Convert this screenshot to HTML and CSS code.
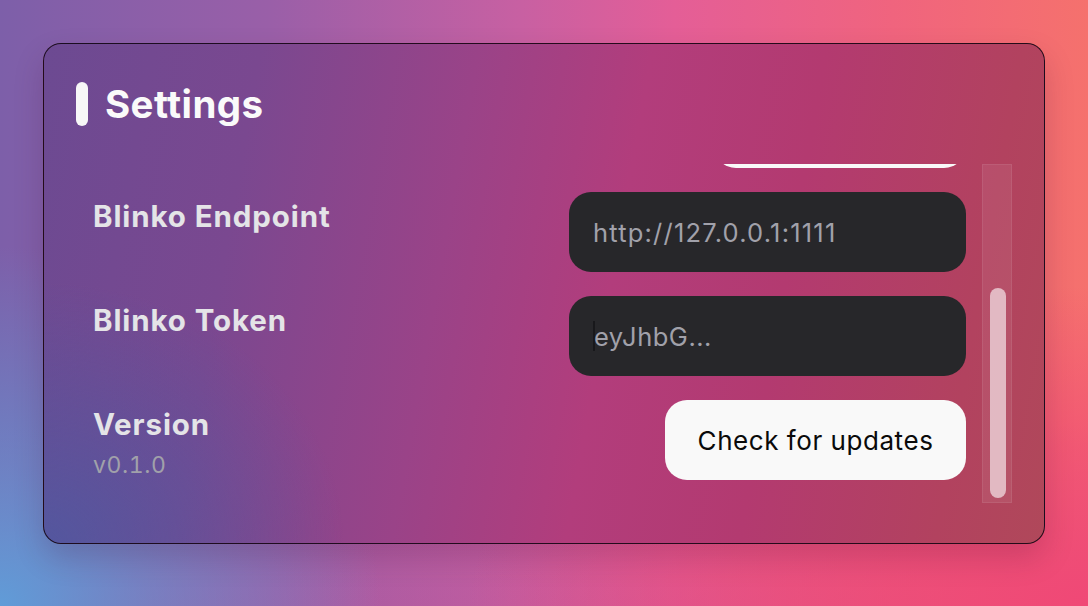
FILE: index.html
```html
<!DOCTYPE html>
<html lang="en">
<head>
<meta charset="utf-8">
<title>Settings</title>
<link rel="stylesheet" href="styles.css">
</head>
<body>
<div class="panel">
  <header class="head">
    <span class="bar"></span>
    <h1 class="title">Settings</h1>
  </header>
  <div class="scroll">
    <div class="content">
      <div class="list">
        <div class="row">
          <div class="label-col"></div>
          <div class="white-btn"></div>
        </div>
        <div class="row">
          <div class="label-col"><div class="label">Blinko Endpoint</div></div>
          <div class="field"><span class="value">http://127.0.0.1:1111</span></div>
        </div>
        <div class="row">
          <div class="label-col"><div class="label">Blinko Token</div></div>
          <div class="field"><span class="caret"></span><span class="placeholder">eyJhbG...</span></div>
        </div>
        <div class="row">
          <div class="label-col">
            <div class="label">Version</div>
            <div class="sub">v0.1.0</div>
          </div>
          <button class="btn">Check for updates</button>
        </div>
      </div>
    </div>
    <div class="track"><div class="thumb"></div></div>
  </div>
</div>
</body>
</html>
```

FILE: styles.css
```css
* { box-sizing: border-box; }
html, body { height: 100%; }
body {
  margin: 0;
  padding: 43px 43px 0 43px;
  font-family: Inter, "Noto Sans", sans-serif;
  background:
    radial-gradient(ellipse 380px 360px at 0% 100%, rgba(96,156,216,1) 0%, rgba(96,156,216,0.55) 40%, rgba(96,156,216,0) 100%),
    radial-gradient(ellipse 620px 320px at 100% 100%, rgba(240,72,118,1) 0%, rgba(240,72,118,0.6) 50%, rgba(240,72,118,0) 100%),
    linear-gradient(180deg, rgba(0,0,0,0) 70%, rgba(180,80,150,0.25) 100%),
    linear-gradient(90deg, #7d5fa9 0%, #9a5fa8 25%, #c860a2 48%, #e45e97 62%, #f0647e 82%, #f5716d 100%);
  overflow: hidden;
}
.panel {
  width: 1002px;
  height: 501px;
  border: 1px solid rgba(20, 6, 18, 0.9);
  border-radius: 18px;
  padding: 38px 32px 40px 32px;
  display: flex;
  flex-direction: column;
  background:
    radial-gradient(ellipse 300px 260px at 0% 100%, rgba(80,88,160,0.9) 0%, rgba(80,88,160,0) 100%),
    linear-gradient(100deg, #6c4a92 0%, #7a4890 20%, #9a4388 40%, #b23d7c 56%, #b33a70 72%, #b2425f 90%, #b0485a 100%);
  box-shadow: 0 14px 30px rgba(60, 0, 40, 0.18);
  overflow: hidden;
}
.head {
  display: flex;
  align-items: center;
  gap: 17px;
  height: 44px;
}
.bar {
  width: 12px;
  height: 44px;
  border-radius: 6px;
  background: #f7f7f7;
}
.title {
  margin: 0;
  font-size: 38.5px;
  font-weight: 700;
  color: #fafafa;
  letter-spacing: 0.4px;
}
.scroll {
  margin-top: 38px;
  height: 339px;
  display: flex;
}
.content {
  flex: 1;
  overflow: hidden;
  padding: 0 16px 0 17px;
}
.list {
  margin-top: -76px;
  display: flex;
  flex-direction: column;
  gap: 24px;
}
.row {
  height: 80px;
  display: flex;
  justify-content: space-between;
  align-items: flex-start;
}
.label-col {
  padding-top: 6px;
  display: flex;
  flex-direction: column;
  gap: 9px;
}
.label {
  font-size: 29.5px;
  font-weight: 700;
  color: #e4e4e7;
  line-height: 36px;
  letter-spacing: 0.9px;
}
.sub {
  font-size: 23px;
  color: #a1a1aa;
  line-height: 28px;
  letter-spacing: 0.6px;
  font-variant-numeric: tabular-nums;
}
.white-btn {
  width: 252px;
  height: 80px;
  border-radius: 22px;
  background: #f9f9f9;
}
.field {
  width: 397px;
  height: 80px;
  border-radius: 22px;
  background: #27272a;
  display: flex;
  align-items: center;
  padding-left: 24px;
  font-size: 25.5px;
  color: #a1a1aa;
  letter-spacing: 0.5px;
}
.value {
  letter-spacing: 1.2px;
}
.caret {
  width: 2px;
  height: 30px;
  background: #18181b;
  margin-right: -1px;
}
.btn {
  width: 301px;
  height: 80px;
  border: 0;
  border-radius: 22px;
  background: #f9f9f9;
  color: #0a0a0a;
  font-family: Inter, "Noto Sans", sans-serif;
  font-size: 26px;
  letter-spacing: 0.55px;
  padding: 0;
}
.track {
  width: 30px;
  height: 339px;
  background: rgba(255, 255, 255, 0.07);
  border: 1px solid rgba(255, 255, 255, 0.08);
  padding: 123px 0 5px 7px;
}
.thumb {
  width: 16px;
  height: 210px;
  border-radius: 8px;
  background: rgba(255, 255, 255, 0.6);
}
```
